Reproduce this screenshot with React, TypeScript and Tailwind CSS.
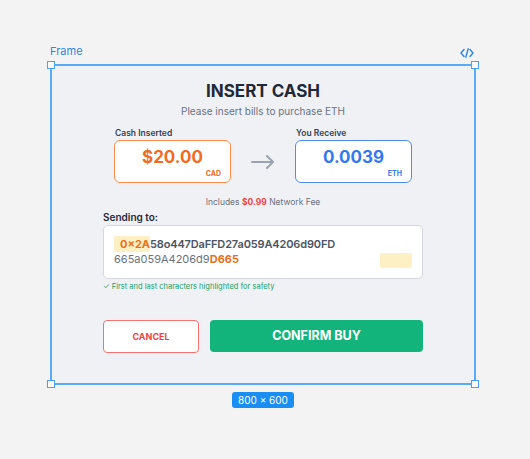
const font = { fontFamily: "Inter, 'Noto Sans', sans-serif" };

function Handle({ pos }: { pos: string }) {
  return (
    <div
      className={`absolute h-[8px] w-[8px] border-[1.5px] border-[#4aa3f0] bg-white ${pos}`}
    />
  );
}

function CodeIcon() {
  return (
    <svg width="14" height="10" viewBox="0 0 14 10" fill="none">
      <path
        d="M4 1.5L1 5l3 3.5M10 1.5L13 5l-3 3.5M8.2 0.8L5.8 9.2"
        stroke="#2f86de"
        strokeWidth="1.4"
        strokeLinecap="round"
        strokeLinejoin="round"
      />
    </svg>
  );
}

function AmountBox({
  label,
  value,
  unit,
  tone,
}: {
  label: string;
  value: string;
  unit: string;
  tone: "orange" | "blue";
}) {
  const box =
    tone === "orange"
      ? "border-[#fb8a4c] text-[#f26b22]"
      : "border-[#4f8df5] text-[#3478f0]";
  return (
    <div className="flex w-[117px] flex-col">
      <div className="pl-[1px] text-[8.5px] font-semibold leading-[12px] text-[#374151]">
        {label}
      </div>
      <div
        className={`mt-[1px] flex h-[43px] flex-col rounded-[6px] border-[1.5px] bg-white pt-[5.5px] ${box}`}
      >
        <div className="text-center text-[17px] font-bold leading-[20px]">
          {value}
        </div>
        <div className="mt-[3px] pr-[9px] text-right text-[7px] font-bold leading-[8px]">
          {unit}
        </div>
      </div>
    </div>
  );
}

export default function App() {
  return (
    <div
      className="h-[459px] w-[530px] bg-[#f3f3f4] pl-[50px] pt-[44px]"
      style={font}
    >
      <div className="w-[426px]">
        <div className="mb-[6px] flex h-[14px] items-end justify-between pr-[2px]">
          <span className="text-[11px] leading-[14px] text-[#2f86de]">Frame</span>
          <CodeIcon />
        </div>

        <div className="relative h-[321px] border-2 border-[#5aabf5] bg-[#f0f1f5]">
          <Handle pos="-left-[5px] -top-[5px]" />
          <Handle pos="-right-[5px] -top-[5px]" />
          <Handle pos="-left-[5px] -bottom-[5px]" />
          <Handle pos="-right-[5px] -bottom-[5px]" />

          <div className="flex flex-col items-center pt-[14px]">
            <div className="text-[17px] font-bold leading-[22px] text-[#1f2937]">
              INSERT CASH
            </div>
            <div className="mt-[2px] text-[10px] leading-[14px] text-[#6b7280]">
              Please insert bills to purchase ETH
            </div>

            <div className="mt-[9px] flex items-end gap-[20px]">
              <AmountBox label="Cash Inserted" value="$20.00" unit="CAD" tone="orange" />
              <div className="flex h-[43px] items-center">
                <svg width="24" height="14" viewBox="0 0 24 14" fill="none">
                  <path
                    d="M1 7h21M16 1l6 6-6 6"
                    stroke="#9ca3af"
                    strokeWidth="2"
                    strokeLinecap="round"
                    strokeLinejoin="round"
                  />
                </svg>
              </div>
              <AmountBox label="You Receive" value="0.0039" unit="ETH" tone="blue" />
            </div>

            <div className="mt-[12.5px] text-[8.5px] leading-[12px] text-[#6b7280]">
              Includes <span className="font-bold text-[#ef4444]">$0.99</span> Network Fee
            </div>

            <div className="mt-[2px] w-[320px]">
              <div className="text-[10px] font-semibold leading-[14px] text-[#1f2937]">
                Sending to:
              </div>
              <div className="relative mt-[1.5px] h-[54px] rounded-[5px] border border-[#d4d7dd] bg-white pl-[10px] pt-[10.5px] text-[11px] leading-[15px]">
                <div className="font-semibold tracking-[-0.15px] text-[#4b5563]">
                  <span className="rounded-[2px] bg-[#fdf0c4] py-[1px] pl-[6px] font-bold tracking-normal text-[#e8701e]">
                    0×2A
                  </span>
                  58o447DaFFD27a059A4206d90FD
                </div>
                <div className="text-[#6b7280]">
                  665a059A4206d9
                  <span className="font-bold text-[#e8701e]">D665</span>
                </div>
                <div className="absolute right-[10px] top-[27px] h-[15px] w-[32px] rounded-[2px] bg-[#fdf0c4]" />
              </div>
              <div className="mt-[3px] text-[7.5px] leading-[10px] text-[#16a06a]">
                ✓ First and last characters highlighted for safety
              </div>

              <div className="mt-[28px] flex gap-[11px]">
                <button className="h-[33px] w-[96px] rounded-[4px] border-[1.5px] border-[#f87171] bg-white text-[9px] font-bold text-[#ef4444]">
                  CANCEL
                </button>
                <button className="h-[32px] flex-1 rounded-[4px] bg-[#12b47c] text-[12.5px] font-bold text-white">
                  CONFIRM BUY
                </button>
              </div>
            </div>
          </div>
        </div>

        <div className="mt-[7px] flex justify-center">
          <span className="rounded-[3px] bg-[#1a8ef5] px-[6px] text-[10px] leading-[16px] text-white">
            800 × 600
          </span>
        </div>
      </div>
    </div>
  );
}
